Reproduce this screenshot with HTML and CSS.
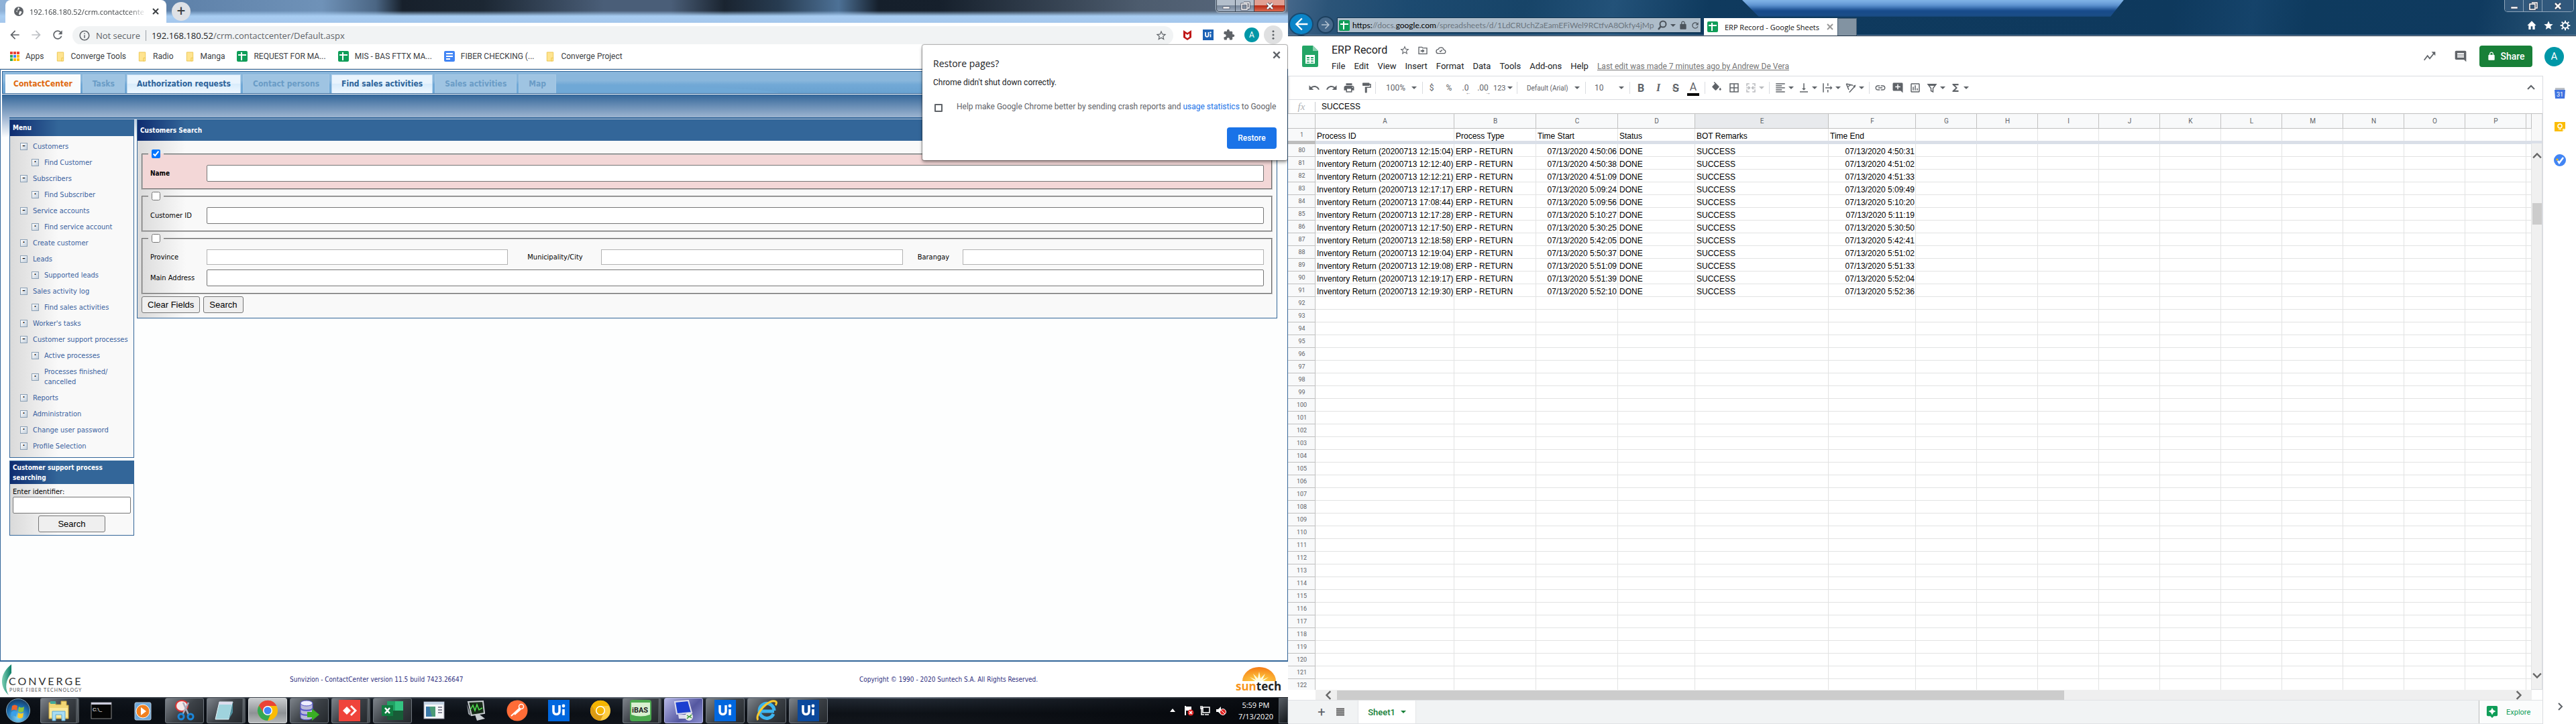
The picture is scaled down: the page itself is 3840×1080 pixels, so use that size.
FILE: index.html
```html
<!DOCTYPE html>
<html lang="en">
<head>
<meta charset="utf-8">
<title>ContactCenter and ERP Record</title>
<link rel="stylesheet" href="styles.css">
</head>
<body>
<svg class="defs" aria-hidden="true">
  <symbol id="back" viewBox="0 0 24 24"><path d="M20 11H7.830l5.590-5.590L12 4l-8 8 8 8 1.410-1.410L7.830 13H20v-2z"/></symbol>
  <symbol id="reload" viewBox="0 0 24 24"><path d="M17.650 6.350C16.200 4.900 14.210 4 12 4c-4.420 0-7.990 3.580-7.990 8s3.570 8 7.990 8c3.730 0 6.840-2.550 7.730-6h-2.080c-.82 2.330-3.040 4-5.650 4-3.310 0-6-2.690-6-6s2.690-6 6-6c1.660 0 3.140.69 4.220 1.780L13 11h7V4l-2.350 2.350z"/></symbol>
  <symbol id="info" viewBox="0 0 24 24"><path d="M11 7h2v2h-2zm0 4h2v6h-2zm1-9C6.480 2 2 6.480 2 12s4.480 10 10 10 10-4.480 10-10S17.520 2 12 2zm0 18c-4.410 0-8-3.590-8-8s3.590-8 8-8 8 3.590 8 8-3.590 8-8 8z"/></symbol>
  <symbol id="star" viewBox="0 0 24 24"><path d="M22 9.240l-7.190-.62L12 2 9.190 8.630 2 9.240l5.460 4.730L5.820 21 12 17.270 18.180 21l-1.630-7.030L22 9.240zM12 15.400l-3.760 2.270 1-4.280-3.320-2.880 4.380-.38L12 6.100l1.710 4.040 4.380.38-3.320 2.880 1 4.280L12 15.400z"/></symbol>
  <symbol id="starfull" viewBox="0 0 24 24"><path d="M12 17.270 18.180 21l-1.640-7.030L22 9.240l-7.190-.61L12 2 9.190 8.630 2 9.240l5.460 4.730L5.820 21z"/></symbol>
  <symbol id="puzzle" viewBox="0 0 24 24"><path d="M20.500 11H19V7c0-1.100-.9-2-2-2h-4V3.500C13 2.120 11.880 1 10.500 1S8 2.120 8 3.500V5H4c-1.100 0-1.990.9-1.990 2v3.800H3.500c1.490 0 2.700 1.210 2.700 2.700s-1.210 2.700-2.700 2.700H2V20c0 1.100.9 2 2 2h3.800v-1.500c0-1.490 1.210-2.700 2.700-2.700 1.490 0 2.700 1.210 2.700 2.700V22H17c1.100 0 2-.9 2-2v-4h1.500c1.380 0 2.500-1.120 2.500-2.500S21.880 11 20.500 11z"/></symbol>
  <symbol id="dots" viewBox="0 0 24 24"><circle cx="12" cy="5" r="2"/><circle cx="12" cy="12" r="2"/><circle cx="12" cy="19" r="2"/></symbol>
  <symbol id="globe" viewBox="0 0 16 16"><circle cx="8" cy="8" r="7"/><path d="M7 2c2 1 3 2 1 3s-1 2-3 2 1 2 0 4M9 8c3-1 4 1 3 2s-1 3-3 3 0-3 0-5z" fill="#fff"/></symbol>
  <symbol id="folder" viewBox="0 0 12 16"><path d="M1 1h10v9l-2 5H1z" fill="#ffe490" stroke="#ecc54e"/><path d="M8 15v-5h3v5z" fill="#ffe490" stroke="#ecc54e"/></symbol>
  <symbol id="sheetico" viewBox="0 0 16 16"><rect width="16" height="16" rx="2" fill="#0f9d58"/><path d="M2 6h12M7 2v12" stroke="#fff" stroke-width="2"/></symbol>
  <symbol id="docico" viewBox="0 0 16 16"><rect width="16" height="16" rx="2" fill="#4285f4"/><path d="M3 4h10M3 8h10M3 12h6" stroke="#fff" stroke-width="2"/></symbol>
  <symbol id="cross" viewBox="0 0 12 12"><path d="M2 2l8 8M10 2l-8 8" stroke="currentColor" stroke-width="2" fill="none"/></symbol>
  <symbol id="winmin" viewBox="0 0 16 16"><rect x="3" y="9" width="10" height="3" fill="#fff" stroke="#445" stroke-width=".6"/></symbol>
  <symbol id="winrest" viewBox="0 0 16 16"><path d="M6 3h8v8h-2M3 5h8v8H3z" fill="none" stroke="#445" stroke-width="3"/><path d="M6 3h8v8h-2M3 5h8v8H3z" fill="none" stroke="#fff" stroke-width="1.500"/></symbol>
  <symbol id="winx" viewBox="0 0 16 16"><path d="M4 4l8 8M12 4l-8 8" stroke="#334" stroke-width="4"/><path d="M4 4l8 8M12 4l-8 8" stroke="#fff" stroke-width="2.500"/></symbol>
  <symbol id="caret" viewBox="0 0 8 8"><path d="M0 2h8L4 6z"/></symbol>
  <symbol id="undo" viewBox="0 0 24 24"><path d="M12.500 8c-2.650 0-5.050.99-6.900 2.600L2 7v9h9l-3.620-3.620c1.390-1.160 3.160-1.880 5.120-1.880 3.540 0 6.550 2.310 7.600 5.500l2.370-.78C21.080 11.030 17.150 8 12.500 8z"/></symbol>
  <symbol id="redo" viewBox="0 0 24 24"><path d="M18.400 10.600C16.550 8.990 14.150 8 11.500 8c-4.650 0-8.580 3.030-9.960 7.220L3.900 16c1.050-3.190 4.050-5.500 7.600-5.500 1.950 0 3.730.72 5.120 1.880L13 16h9V7l-3.600 3.600z"/></symbol>
  <symbol id="print" viewBox="0 0 24 24"><path d="M19 8H5c-1.660 0-3 1.340-3 3v6h4v4h12v-4h4v-6c0-1.660-1.340-3-3-3zm-3 11H8v-5h8v5zm3-7c-.55 0-1-.45-1-1s.45-1 1-1 1 .45 1 1-.45 1-1 1zm-1-9H6v4h12V3z"/></symbol>
  <symbol id="paint" viewBox="0 0 24 24"><path d="M18 4V3c0-.55-.45-1-1-1H5c-.55 0-1 .45-1 1v4c0 .55.45 1 1 1h12c.55 0 1-.45 1-1V6h1v4H9v11c0 .55.45 1 1 1h2c.55 0 1-.45 1-1v-9h8V4h-3z"/></symbol>
  <symbol id="fill" viewBox="0 0 24 24"><path d="M16.560 8.940L7.620 0 6.210 1.410l2.380 2.380-5.150 5.150c-.59.59-.59 1.540 0 2.120l5.500 5.500c.29.29.68.44 1.060.44s.77-.15 1.060-.44l5.500-5.500c.59-.58.59-1.530 0-2.120zM19 11.500s-2 2.170-2 3.500c0 1.100.9 2 2 2s2-.9 2-2c0-1.330-2-3.500-2-3.500z"/></symbol>
  <symbol id="borders" viewBox="0 0 24 24"><path d="M3 3v18h18V3H3zm8 16H5v-6h6v6zm0-8H5V5h6v6zm8 8h-6v-6h6v6zm0-8h-6V5h6v6z"/></symbol>
  <symbol id="merge" viewBox="0 0 24 24"><path d="M9 4H4v5M15 4h5v5M9 20H4v-5M15 20h5v-5M3 12h6M21 12h-6M7 9l3 3-3 3M17 9l-3 3 3 3" fill="none" stroke="currentColor" stroke-width="2"/></symbol>
  <symbol id="align" viewBox="0 0 24 24"><path d="M15 15H3v2h12v-2zm0-8H3v2h12V7zM3 13h18v-2H3v2zm0 8h18v-2H3v2zM3 3v2h18V3H3z"/></symbol>
  <symbol id="valign" viewBox="0 0 24 24"><path d="M16 13h-3V3h-2v10H8l4 4 4-4zM4 19v2h16v-2H4z"/></symbol>
  <symbol id="wrap" viewBox="0 0 24 24"><path d="M4 3v18M13 3v5M13 16v5M8 12h11" fill="none" stroke="currentColor" stroke-width="2"/><path d="M18 8l4 4-4 4z"/></symbol>
  <symbol id="rotate" viewBox="0 0 24 24"><path d="M3 4l13 3M3 4l5 12M6 10l6-4M9 21L20 9" fill="none" stroke="currentColor" stroke-width="2"/><path d="M16 8l6-2-2 6z"/></symbol>
  <symbol id="link" viewBox="0 0 24 24"><path d="M3.900 12c0-1.710 1.390-3.100 3.100-3.100h4V7H7c-2.760 0-5 2.240-5 5s2.240 5 5 5h4v-1.900H7c-1.710 0-3.100-1.390-3.100-3.100zM8 13h8v-2H8v2zm9-6h-4v1.900h4c1.710 0 3.100 1.390 3.100 3.100s-1.390 3.100-3.100 3.100h-4V17h4c2.760 0 5-2.240 5-5s-2.240-5-5-5z"/></symbol>
  <symbol id="addnote" viewBox="0 0 24 24"><path fill-rule="evenodd" d="M22 4c0-1.100-.9-2-2-2H4c-1.100 0-2 .9-2 2v12c0 1.100.9 2 2 2h14l4 4V4zM17 11h-4v4h-2v-4H7V9h4V5h2v4h4v2z"/></symbol>
  <symbol id="note" viewBox="0 0 24 24"><path fill-rule="evenodd" d="M22 4c0-1.100-.9-2-2-2H4c-1.100 0-2 .9-2 2v12c0 1.100.9 2 2 2h14l4 4V4zM18 14H6v-2h12v2zm0-3H6V9h12v2zm0-3H6V6h12v2z"/></symbol>
  <symbol id="chart" viewBox="0 0 24 24"><path d="M19 3H5c-1.100 0-2 .9-2 2v14c0 1.100.9 2 2 2h14c1.100 0 2-.9 2-2V5c0-1.100-.9-2-2-2zm0 16H5V5h14v14zM7 10h2v7H7zm4-3h2v10h-2zm4 6h2v4h-2z"/></symbol>
  <symbol id="filter" viewBox="0 0 24 24"><path d="M4 5h16l-6 8v7l-4-2v-5z" fill="none" stroke="currentColor" stroke-width="2"/><path d="M4 4h16l-2 4H6z"/></symbol>
  <symbol id="sigma" viewBox="0 0 24 24"><path d="M18 4H6v2l6.500 6L6 18v2h12v-3h-7l5-5-5-5h7z"/></symbol>
  <symbol id="trend" viewBox="0 0 24 24"><path d="M2 19l6-8 4 5 8-10" fill="none" stroke="currentColor" stroke-width="2"/><path d="M15 4h7v7z"/></symbol>
  <symbol id="lock" viewBox="0 0 24 24"><path fill-rule="evenodd" d="M18 8h-1V6c0-2.760-2.240-5-5-5S7 3.240 7 6v2H6c-1.100 0-2 .9-2 2v10c0 1.100.9 2 2 2h12c1.100 0 2-.9 2-2V10c0-1.100-.9-2-2-2zM9 8V6c0-1.660 1.340-3 3-3s3 1.340 3 3v2z"/></symbol>
  <symbol id="move" viewBox="0 0 24 24"><path d="M3 5h7l2 2h9v13H3z" fill="none" stroke="currentColor" stroke-width="2"/><path d="M11 9l5 4.500-5 4V15H7v-3h4z"/></symbol>
  <symbol id="cloud" viewBox="0 0 24 24"><path d="M6 19a4.500 4.500 0 0 1 0-9 6.500 6.500 0 0 1 12.500 1A4 4 0 0 1 18 19zM9 13l2 2 4-4" fill="none" stroke="currentColor" stroke-width="2"/></symbol>
  <symbol id="home" viewBox="0 0 24 24"><path d="M10 21v-7h4v7h5v-9h3L12 2 2 12h3v9z"/></symbol>
  <symbol id="gear" viewBox="0 0 24 24"><circle cx="12" cy="12" r="6" fill="none" stroke="currentColor" stroke-width="3"/><path d="M12 1v4M12 19v4M1 12h4M19 12h4M4 4l3 3M17 17l3 3M4 20l3-3M17 7l3-3" stroke="currentColor" stroke-width="3"/></symbol>
  <symbol id="search" viewBox="0 0 16 16"><circle cx="9" cy="6" r="4.500" fill="none" stroke="currentColor" stroke-width="2"/><path d="M6 9l-4 5" stroke="currentColor" stroke-width="2.500"/></symbol>
  <symbol id="chev" viewBox="0 0 12 12"><path d="M4 1l5 5-5 5" fill="none" stroke="currentColor" stroke-width="2"/></symbol>
  <symbol id="ui" viewBox="0 0 32 32"><rect width="32" height="32" fill="currentColor"/><path d="M8 8v9c0 6 9 6 9 0V8M23 14v9" fill="none" stroke="#fff" stroke-width="3.500"/><circle cx="23" cy="9" r="2.400" fill="#fff"/></symbol>
</svg>

<div class="desktop">
  <section class="screen chrome">
    <header class="titlebar">
      <div class="tab"><svg class="i16 grey"><use href="#globe"/></svg><span class="tabname">192.168.180.52/crm.contactcente</span><button class="bare" aria-label="Close tab"><svg class="i12"><use href="#cross"/></svg></button></div>
      <button class="newtab" aria-label="New tab">+</button>
      <div class="winbtns"><button aria-label="Minimise"><svg class="i16"><use href="#winmin"/></svg></button><button aria-label="Restore down"><svg class="i16"><use href="#winrest"/></svg></button><button class="red" aria-label="Close"><svg class="i16"><use href="#winx"/></svg></button></div>
    </header>
    <div class="navbar">
      <button class="bare" aria-label="Back"><svg class="i20 grey"><use href="#back"/></svg></button>
      <button class="bare fwd" aria-label="Forward"><svg class="i20"><use href="#back"/></svg></button>
      <button class="bare" aria-label="Reload"><svg class="i20 grey"><use href="#reload"/></svg></button>
      <div class="omnibox"><svg class="i18 grey"><use href="#info"/></svg><span class="insecure">Not secure</span><span class="url"><b>192.168.180.52</b>/crm.contactcenter/Default.aspx</span><svg class="i18 grey end"><use href="#star"/></svg></div>
      <div class="exts">
        <svg class="i18" viewBox="0 0 18 18"><path d="M3 2l6 4 6-4v11l-6 4-6-4zM6 7v5l3 2 3-2V7L9 9z" fill="#c01818" fill-rule="evenodd"/></svg>
        <svg class="i16 uiblue"><use href="#ui"/></svg>
        <svg class="i18 grey"><use href="#puzzle"/></svg>
        <span class="avatar small">A</span>
        <button class="more" aria-label="Menu"><svg class="i18 grey"><use href="#dots"/></svg></button>
      </div>
    </div>
    <nav class="bookmarks">
      <a href="#"><svg class="i14" viewBox="0 0 14 14"><path d="M0 0h4v4H0zM5 0h4v4H5zM10 0h4v4h-4z" fill="#ea4335"/><path d="M0 5h4v4H0z" fill="#34a853"/><path d="M5 5h4v4H5z" fill="#4285f4"/><path d="M10 5h4v4h-4zM5 10h4v4H5zM10 10h4v4h-4z" fill="#fbbc05"/><path d="M0 10h4v4H0z" fill="#34a853"/></svg>Apps</a>
      <a href="#"><svg class="fold"><use href="#folder"/></svg>Converge Tools</a>
      <a href="#"><svg class="fold"><use href="#folder"/></svg>Radio</a>
      <a href="#"><svg class="fold"><use href="#folder"/></svg>Manga</a>
      <a href="#"><svg class="i16"><use href="#sheetico"/></svg>REQUEST FOR MA...</a>
      <a href="#"><svg class="i16"><use href="#sheetico"/></svg>MIS - BAS FTTX MA...</a>
      <a href="#"><svg class="i16"><use href="#docico"/></svg>FIBER CHECKING (...</a>
      <a href="#"><svg class="fold"><use href="#folder"/></svg>Converge Project</a>
    </nav>

    <main class="crm">
      <nav class="crmtabs">
        <a href="#" class="current">ContactCenter</a><a href="#" class="off">Tasks</a><a href="#">Authorization requests</a><a href="#" class="off">Contact persons</a><a href="#">Find sales activities</a><a href="#" class="off">Sales activities</a><a href="#" class="off">Map</a>
      </nav>
      <div class="crmbody">
        <div class="columns">
          <aside class="side">
            <section class="panel">
              <h2>Menu</h2>
              <ul class="tree">
                <li class="open"><a href="#">Customers</a></li>
                <li class="sub"><a href="#">Find Customer</a></li>
                <li class="open"><a href="#">Subscribers</a></li>
                <li class="sub"><a href="#">Find Subscriber</a></li>
                <li class="open"><a href="#">Service accounts</a></li>
                <li class="sub"><a href="#">Find service account</a></li>
                <li><a href="#">Create customer</a></li>
                <li class="open"><a href="#">Leads</a></li>
                <li class="sub"><a href="#">Supported leads</a></li>
                <li class="open"><a href="#">Sales activity log</a></li>
                <li class="sub"><a href="#">Find sales activities</a></li>
                <li><a href="#">Worker's tasks</a></li>
                <li class="open"><a href="#">Customer support processes</a></li>
                <li class="sub"><a href="#">Active processes</a></li>
                <li class="sub"><a href="#">Processes finished/<br>cancelled</a></li>
                <li><a href="#">Reports</a></li>
                <li><a href="#">Administration</a></li>
                <li><a href="#">Change user password</a></li>
                <li><a href="#">Profile Selection</a></li>
              </ul>
            </section>
            <section class="panel">
              <h2>Customer support process searching</h2>
              <form class="lookup">
                <label for="ident">Enter identifier:</label>
                <input id="ident" type="text">
                <button type="button">Search</button>
              </form>
            </section>
          </aside>
          <section class="panel results">
            <h2>Customers Search</h2>
            <form class="criteria">
              <fieldset class="active"><legend><input type="checkbox" checked aria-label="Search by name"></legend>
                <div class="row"><label for="name">Name</label><input id="name" type="text"></div></fieldset>
              <fieldset><legend><input type="checkbox" aria-label="Search by customer ID"></legend>
                <div class="row"><label for="cid">Customer ID</label><input id="cid" type="text"></div></fieldset>
              <fieldset><legend><input type="checkbox" aria-label="Search by address"></legend>
                <div class="row three"><label for="prov">Province</label><input id="prov" type="text"><label for="city" class="city">Municipality/City</label><input id="city" type="text"><label for="brgy" class="brgy">Barangay</label><input id="brgy" type="text"></div>
                <div class="row"><label for="addr">Main Address</label><input id="addr" type="text"></div></fieldset>
              <div class="actions"><button type="button">Clear Fields</button><button type="button">Search</button></div>
            </form>
          </section>
        </div>
      </div>
    </main>
    <footer class="credits">
      <svg class="converge" viewBox="0 0 130 46"><defs><linearGradient id="leaf" x1="0" x2="1"><stop offset="0" stop-color="#7fd0b4"/><stop offset="1" stop-color="#0a7d66"/></linearGradient></defs><path d="M14 0C-4 14-4 34 10 46 4 36 5 24 14 13z" fill="url(#leaf)"/><text x="10" y="31" font-size="16" letter-spacing="3" fill="#333">CONVERGE</text><text x="11" y="41" font-size="7" letter-spacing="1" fill="#555">PURE FIBER TECHNOLOGY</text></svg>
      <span>Sunvizion - ContactCenter version 11.5 build 7423.26647</span>
      <span>Copyright © 1990 - 2020 Suntech S.A. All Rights Reserved.</span>
      <svg class="suntech" viewBox="0 0 74 40"><defs><radialGradient id="sun" cx=".5" cy="1" r="1"><stop offset="0" stop-color="#ffd84a"/><stop offset="1" stop-color="#f57a14"/></radialGradient></defs><path d="M10 22a25 21 0 0 1 50 0z" fill="url(#sun)"/><path d="M35 8l2 10 7-7-4 9 9-4-8 6H29l-8-6 9 4-4-9 7 7z" fill="#fffbe0"/><text x="0" y="36" font-size="17" font-weight="bold" fill="#f7941d">sun<tspan fill="#222">tech</tspan></text></svg>
    </footer>

    <nav class="taskbar">
      <button class="orb" aria-label="Start"><svg viewBox="0 0 38 38"><defs><radialGradient id="orb" cx=".5" cy=".8" r=".8"><stop offset="0" stop-color="#7fd4f5"/><stop offset=".6" stop-color="#1b6eb0"/><stop offset="1" stop-color="#18375e"/></radialGradient></defs><circle cx="19" cy="19" r="17.500" fill="url(#orb)" stroke="#8ab" /><path d="M10 12q4-3 8 0l-1 7q-4-3-8 0z" fill="#f0642c"/><path d="M20 13q4 3 8 0l-1 7q-4 3-8 0z" fill="#8cc63f"/><path d="M9 21q4-3 8 0l-1 7q-4-3-8 0z" fill="#3aa0e8"/><path d="M19 22q4 3 8 0l-1 7q-4 3-8 0z" fill="#fcc92a"/></svg></button>
      <div class="apps">
        <button class="run stack" aria-label="Explorer"><svg viewBox="0 0 32 32"><path d="M2 4h10v3h8V2h8v6h3v20H2z" fill="#f2d675" stroke="#c9a540"/><path d="M4 2h8v4H4z" fill="#4a9"/><path d="M3 12h27v14H3z" fill="#fbe99b"/><path d="M7 31V17h19v14h-5v-9h-9v9z" fill="#a8dcf4" stroke="#5aa7d4"/></svg></button>
        <button aria-label="Command prompt"><svg viewBox="0 0 32 32"><rect x="1" y="4" width="30" height="24" fill="#050505" stroke="#888"/><path d="M1 4h30v3H1z" fill="#ccd"/><text x="3" y="17" font-size="8" fill="#fff">C:\_</text></svg></button>
        <button aria-label="Media player"><svg viewBox="0 0 32 32"><rect x="4" y="4" width="24" height="26" rx="2" fill="#6fa8d8" stroke="#bcd"/><circle cx="16" cy="17" r="10" fill="#f08020" stroke="#fff"/><path d="M13 11l8 6-8 6z" fill="#fff"/></svg></button>
        <button class="run" aria-label="Snipping tool"><svg viewBox="0 0 32 32"><ellipse cx="12" cy="9" rx="9" ry="8" fill="#f4e9e9" stroke="#d33" stroke-width="2"/><path d="M14 4l8 18M22 4l-9 18" stroke="#aab" stroke-width="2.500"/><circle cx="11" cy="25" r="4" fill="none" stroke="#1c86d8" stroke-width="3"/><circle cx="25" cy="25" r="4" fill="none" stroke="#1c86d8" stroke-width="3"/></svg></button>
        <button class="run stack" aria-label="Notepad"><svg viewBox="0 0 32 32"><path d="M8 3h20l-6 26H2z" fill="#9fd3dd" stroke="#e8f4f8"/><path d="M8 3h20l-1 4H7z" fill="#dde"/><path d="M28 3v16l-6 10z" fill="#4d8d9b"/></svg></button>
        <button class="run lit" aria-label="Chrome"><svg viewBox="0 0 32 32"><circle cx="16" cy="16" r="15" fill="#fbbc05"/><path d="M3 8.500A15 15 0 0 1 29.500 9H16l-6 11z" fill="#ea4335"/><path d="M3 8.500l7.500 12L20 22l-4 9A15 15 0 0 1 3 8.500z" fill="#34a853"/><circle cx="16" cy="16" r="7" fill="#fff"/><circle cx="16" cy="16" r="5.500" fill="#4285f4"/></svg></button>
        <button class="run" aria-label="Database"><svg viewBox="0 0 32 32"><path d="M3 5v21c0 5 18 5 18 0V5z" fill="#b9b9d8" stroke="#55c"/><ellipse cx="12" cy="5" rx="9" ry="4" fill="#eef" stroke="#55c"/><path d="M3 12c0 5 18 5 18 0M3 19c0 5 18 5 18 0" fill="none" stroke="#55c" stroke-width="2"/><path d="M13 18h7v-5l11 9-11 9v-5h-7z" fill="#3aae24"/></svg></button>
        <button class="run stack" aria-label="AnyDesk"><svg viewBox="0 0 32 32"><rect width="32" height="32" fill="#ef443b"/><path d="M6 16l6-6 6 6-6 6zM17 10l2-2 8 8-8 8-2-2 6-6z" fill="#fff"/></svg></button>
        <button class="run" aria-label="Excel"><svg viewBox="0 0 32 32"><rect x="8" y="2" width="24" height="28" fill="#21a366"/><path d="M20 2h12v14H20z" fill="#33c481"/><path d="M8 16h24v14H8z" fill="#185c37"/><rect y="8" width="17" height="16" fill="#107c41"/><path d="M5 12l7 8M12 12l-7 8" stroke="#fff" stroke-width="2.500"/></svg></button>
        <button aria-label="Program"><svg viewBox="0 0 32 32"><rect x="1" y="3" width="30" height="25" fill="#f4f6f8" stroke="#99a"/><path d="M1 3h30v4H1z" fill="#c4d4e4"/><path d="M4 10h14v15H4z" fill="#3a78a8"/><path d="M9 10h9v15h-5z" fill="#4b9a76"/><path d="M22 11h6M22 15h6M22 19h6" stroke="#889" stroke-width="2"/></svg></button>
        <button aria-label="Monitor"><svg viewBox="0 0 32 32"><path d="M5 3l22-1 2 18-19 3z" fill="#182a18" stroke="#c8ccd0" stroke-width="2"/><path d="M8 15l4-7 3 8 3-9 3 8 5-3" stroke="#4fe04f" fill="none" stroke-width="1.500"/><path d="M3 6l6 18-4-3z" fill="#9aa0a6"/><path d="M15 22h7l8 6-12 3z" fill="#c8ccd0"/></svg></button>
        <button aria-label="Postman"><svg viewBox="0 0 32 32"><circle cx="16" cy="16" r="15.500" fill="#ff6c37"/><path d="M7 24l13-12M12 22l9-8" stroke="#fff" stroke-width="2"/><circle cx="22" cy="10" r="3.500" fill="none" stroke="#fff" stroke-width="1.500"/></svg></button>
        <button class="c1" aria-label="UiPath"><svg><use href="#ui"/></svg></button>
        <button aria-label="Chrome Canary"><svg viewBox="0 0 32 32"><circle cx="16" cy="16" r="15" fill="#ffcd40"/><path d="M3 8.500A15 15 0 0 1 29.500 9H16l-6 11z" fill="#f4b400"/><path d="M3 8.500l7.500 12L20 22l-4 9A15 15 0 0 1 3 8.500z" fill="#db9b13"/><circle cx="16" cy="16" r="7" fill="#fff"/><circle cx="16" cy="16" r="5.500" fill="#f4b400"/></svg></button>
        <button class="run stack" aria-label="iBAS"><svg viewBox="0 0 32 32"><rect width="32" height="32" rx="4" fill="#4aa84e"/><path d="M2 4h28v18q-14 5-28 0z" fill="#d8f0d0"/><text x="3" y="19" font-size="11" font-weight="bold" fill="#222">iBAS</text></svg></button>
        <button class="run violet" aria-label="Remote desktop"><svg viewBox="0 0 32 32"><path d="M3 3l20-2 5 18-22 2z" fill="#1c3fd0" stroke="#dde" stroke-width="2"/><path d="M8 22h12l3 6H9z" fill="#dde"/><circle cx="24" cy="25" r="6" fill="#e8ece8"/><path d="M21 23l3 2-3 3M28 22l-3 3 3 2" stroke="#3a9a3a" stroke-width="1.500" fill="none"/></svg></button>
        <button class="run c1" aria-label="UiPath Studio"><svg><use href="#ui"/></svg></button>
        <button class="run" aria-label="Internet Explorer"><svg viewBox="0 0 32 32"><path d="M7 17h20M26 21a11 11 0 1 1 1-5" fill="none" stroke="#3cb4ee" stroke-width="5"/><path d="M3 30C-3 22 20-4 30 3c1 1 0 4-1 5" fill="none" stroke="#fbc92c" stroke-width="3"/></svg></button>
        <button class="run c2" aria-label="UiPath Robot"><svg><use href="#ui"/></svg></button>
      </div>
      <div class="tray">
        <svg class="i8" viewBox="0 0 8 8"><path d="M0 6l4-5 4 5z" fill="#fff"/></svg>
        <svg class="i16" viewBox="0 0 16 16"><path d="M3 1v14" stroke="#fff" stroke-width="2"/><path d="M4 2h8v6H4z" fill="#fff"/><circle cx="11" cy="11" r="4.500" fill="#d22"/><path d="M9 9l4 4M13 9l-4 4" stroke="#fff" stroke-width="1.500"/></svg>
        <svg class="i16" viewBox="0 0 16 16"><path d="M5 3h10v8H5zM8 14h6M2 1v4h2V1M3 5v9h4" fill="none" stroke="#fff" stroke-width="1.500"/></svg>
        <svg class="i16" viewBox="0 0 16 16"><path d="M1 6h3l4-4v12l-4-4H1z" fill="#fff"/><circle cx="11" cy="10" r="4.500" fill="#d22" stroke="#fff"/><path d="M8 7l6 6" stroke="#fff"/></svg>
        <time>5:59 PM<br>7/13/2020</time>
        <button class="peek" aria-label="Show desktop"></button>
      </div>
    </nav>

    <div class="bubble" role="dialog" aria-label="Restore pages?">
      <button class="bare shut" aria-label="Close"><svg class="i14"><use href="#cross"/></svg></button>
      <h3>Restore pages?</h3>
      <p>Chrome didn't shut down correctly.</p>
      <div class="consent"><input id="crash" type="checkbox"><label for="crash">Help make Google Chrome better by sending crash reports and <a href="#">usage statistics</a> to Google</label></div>
      <button class="restore">Restore</button>
    </div>
  </section>

  <section class="screen ie">
    <header class="iebar">
      <div class="glow"></div>
      <button class="ieback" aria-label="Back"><svg class="i28"><use href="#back"/></svg></button>
      <button class="iefwd" aria-label="Forward"><svg class="i18"><use href="#back"/></svg></button>
      <div class="address"><svg class="i16"><use href="#sheetico"/></svg><span class="ieurl"><b>https:</b>//docs.<b>google.com</b>/spreadsheets/d/1LdCRUchZaEamEFiWel9RCtfvA8Okfy4jMp</span><svg class="i16"><use href="#search"/></svg><svg class="i8"><use href="#caret"/></svg><svg class="i14"><use href="#lock"/></svg><svg class="i14"><use href="#reload"/></svg></div>
      <div class="ietab"><svg class="i16"><use href="#sheetico"/></svg><span>ERP Record - Google Sheets</span><button class="bare" aria-label="Close tab"><svg class="i12"><use href="#cross"/></svg></button></div>
      <button class="ienew" aria-label="New tab"></button>
      <div class="ieright">
        <div class="winbtns dark"><button aria-label="Minimise"><svg class="i16"><use href="#winmin"/></svg></button><button aria-label="Restore down"><svg class="i16"><use href="#winrest"/></svg></button><button class="last" aria-label="Close"><svg class="i16"><use href="#winx"/></svg></button></div>
        <div class="iecmds"><svg class="i16"><use href="#home"/></svg><svg class="i16"><use href="#starfull"/></svg><svg class="i16"><use href="#gear"/></svg></div>
      </div>
    </header>
    <header class="dochead">
      <svg class="logo" viewBox="0 0 24 32"><path d="M2 0h14l8 8v22a2 2 0 0 1-2 2H2a2 2 0 0 1-2-2V2a2 2 0 0 1 2-2z" fill="#23a566"/><path d="M16 0l8 8h-8z" fill="#8ed1b1"/><path d="M5 14h14v13H5zM7 17h4v2H7zm6 0h4v2h-4zm-6 3.500h4v1.500H7zm6 0h4v1.500h-4zM7 24h4v1.500H7zm6 0h4v1.500h-4z" fill="#fff" fill-rule="evenodd"/></svg>
      <div class="docinfo">
        <div class="doctitle"><h1>ERP Record</h1><svg class="i16"><use href="#star"/></svg><svg class="i16"><use href="#move"/></svg><svg class="i16"><use href="#cloud"/></svg></div>
        <nav class="menus"><a href="#">File</a><a href="#">Edit</a><a href="#">View</a><a href="#">Insert</a><a href="#">Format</a><a href="#">Data</a><a href="#">Tools</a><a href="#">Add-ons</a><a href="#">Help</a><a href="#" class="lastedit">Last edit was made 7 minutes ago by Andrew De Vera</a></nav>
      </div>
      <div class="docactions"><svg class="i20"><use href="#trend"/></svg><svg class="i20"><use href="#note"/></svg><button class="share"><svg class="i14"><use href="#lock"/></svg>Share</button><span class="avatar">A</span></div>
    </header>
    <div class="lower">
      <div class="editor">
        <div class="tools">
          <div class="grp lead"><button aria-label="Undo"><svg><use href="#undo"/></svg></button><button aria-label="Redo"><svg><use href="#redo"/></svg></button><button aria-label="Print"><svg><use href="#print"/></svg></button><button aria-label="Paint format"><svg><use href="#paint"/></svg></button></div>
          <div class="pick zoom"><select aria-label="Zoom"><option>100%</option></select><svg class="i8"><use href="#caret"/></svg></div>
          <div class="grp"><button>$</button><button>%</button><button>.0<sub>←</sub></button><button>.00<sub>→</sub></button><button class="num">123<svg class="i8"><use href="#caret"/></svg></button></div>
          <div class="pick font"><select aria-label="Font"><option>Default (Arial)</option></select><svg class="i8"><use href="#caret"/></svg></div>
          <div class="pick size"><select aria-label="Font size"><option>10</option></select><svg class="i8"><use href="#caret"/></svg></div>
          <div class="grp text"><button><b>B</b></button><button><i>I</i></button><button><s>S</s></button><button><span class="inked">A</span></button></div>
          <div class="grp cells"><button aria-label="Fill"><svg><use href="#fill"/></svg></button><button aria-label="Borders"><svg><use href="#borders"/></svg></button><button class="drop faint" aria-label="Merge"><svg><use href="#merge"/></svg><svg class="i8"><use href="#caret"/></svg></button></div>
          <div class="grp cells"><button class="drop" aria-label="Align"><svg><use href="#align"/></svg><svg class="i8"><use href="#caret"/></svg></button><button class="drop" aria-label="Vertical align"><svg><use href="#valign"/></svg><svg class="i8"><use href="#caret"/></svg></button><button class="drop" aria-label="Wrapping"><svg><use href="#wrap"/></svg><svg class="i8"><use href="#caret"/></svg></button><button class="drop" aria-label="Rotation"><svg><use href="#rotate"/></svg><svg class="i8"><use href="#caret"/></svg></button></div>
          <div class="grp text"><button aria-label="Link"><svg><use href="#link"/></svg></button><button aria-label="Comment"><svg><use href="#addnote"/></svg></button><button aria-label="Chart"><svg><use href="#chart"/></svg></button><button class="drop" aria-label="Filter"><svg><use href="#filter"/></svg><svg class="i8"><use href="#caret"/></svg></button><button class="drop" aria-label="Functions"><svg><use href="#sigma"/></svg><svg class="i8"><use href="#caret"/></svg></button></div>
          <button class="bare collapse" aria-label="Hide menus"><svg class="i12 up"><use href="#chev"/></svg></button>
        </div>
        <div class="formula"><label for="fx">fx</label><input id="fx" type="text" value="SUCCESS"></div>
        <div class="gridwrap">
          <div class="sheet">
            <table>
              <colgroup><col class="rh"><col class="ca"><col class="cb"><col class="cb"><col class="cd"><col class="ce"><col class="cf"><col class="cg"><col class="cg"><col class="cg"><col class="cg"><col class="cg"><col class="cg"><col class="cg"><col class="cg"><col class="cg"><col class="cg"><col></colgroup>
              <thead><tr id="letters"></tr></thead>
              <tbody id="rows"></tbody>
            </table>
          </div>
          <div class="vscroll"><div class="cap"></div><svg class="i14 up"><use href="#chev"/></svg><div class="vthumb"></div><svg class="i14 down"><use href="#chev"/></svg></div>
        </div>
        <div class="hscroll"><svg class="i14 left"><use href="#chev"/></svg><div class="track"><div class="hthumb"></div></div><svg class="i14"><use href="#chev"/></svg></div>
        <div class="sheets"><button class="bare plus" aria-label="Add sheet">+</button><button class="bare" aria-label="All sheets"><svg class="i12" viewBox="0 0 12 12"><path d="M0 1.500h12M0 4.500h12M0 7.500h12M0 10.500h12" stroke="#555" stroke-width="2"/></svg></button><button class="sheettab">Sheet1<svg class="i8"><use href="#caret"/></svg></button><button class="explore"><svg class="i18" viewBox="0 0 18 20"><path d="M2 0h14a2 2 0 0 1 2 2v13a2 2 0 0 1-2 2h-4l-3 3-3-3H2a2 2 0 0 1-2-2V2a2 2 0 0 1 2-2z" fill="#0f9d58"/><path d="M9 3l2 4 4 2-4 2-2 4-2-4-4-2 4-2z" fill="#fff"/></svg>Explore</button></div>
      </div>
      <aside class="addons">
        <svg class="i18" viewBox="0 0 18 18"><path d="M2 1h14v5H2z" fill="#bdc1c6"/><path d="M1 4h16l-1 13H2z" fill="#3f72e0"/><text x="4" y="14" font-size="9" fill="#fff">31</text></svg>
        <svg class="i18" viewBox="0 0 18 18"><path d="M1 2h16v10l-4 4H1z" fill="#fbbc04"/><path d="M13 16v-4h4z" fill="#fff3c0"/><circle cx="9" cy="8" r="3" fill="none" stroke="#fff" stroke-width="1.500"/><path d="M7 13h4" stroke="#fff"/></svg>
        <svg class="i18" viewBox="0 0 18 18"><circle cx="9" cy="9" r="9" fill="#4285f4"/><path d="M6 10l2 3 6-8" stroke="#fff" stroke-width="2.500" fill="none"/><circle cx="5" cy="8" r="1.500" fill="#fbbc04"/></svg>
        <svg class="i12 bottom"><use href="#chev"/></svg>
      </aside>
    </div>
  </section>
</div>
<script src="sheet.js"></script>
</body>
</html>
```
FILE: styles.css
```css
* { box-sizing: border-box; }
body { margin: 0; background: #fff; font-family: Roboto, "Open Sans", sans-serif; font-size: 12px; }
a { color: inherit; text-decoration: none; }
button { font: inherit; color: inherit; cursor: pointer; }
svg { display: block; fill: currentColor; flex: none; }
h1, h2, h3, p, ul { margin: 0; padding: 0; font-weight: normal; }
.defs { position: absolute; width: 0; height: 0; }
.bare { border: 0; background: none; padding: 0; display: flex; align-items: center; justify-content: center; }
.i8 { width: 8px; height: 8px; }
.i12 { width: 12px; height: 12px; }
.i14 { width: 14px; height: 14px; }
.i16 { width: 16px; height: 16px; }
.i18 { width: 18px; height: 18px; }
.i20 { width: 20px; height: 20px; }
.i28 { width: 28px; height: 28px; }
.grey { color: #5f6368; }

.desktop { display: flex; height: 100vh; min-height: 860px; overflow: hidden; }
.screen { flex: 1 1 0; min-width: 0; display: flex; flex-direction: column; position: relative; }

/* Chrome window frame */
.titlebar { height: 34px; display: flex; align-items: flex-start; padding-left: 8px; background:
  linear-gradient(to bottom, transparent 16px, #a8cdf2 24px, #a4c6ec),
  linear-gradient(to right, #8fb2d8 0, #5d80a8 250px, #6f92b8 480px, #4b6684 560px, #17202b 600px, #1c2733 720px, #4a5e78 900px, #4a5e78 1000px, #1a2430 1080px, #273b50 1160px, #4d7196 1250px, #151f2b 1310px, #16202c 1400px, #4d5c6e 1700px, #5a6a80); }
.tab { width: 240px; height: 34px; background: #fff; border-radius: 8px 8px 0 0; display: flex; align-items: center; gap: 8px; padding: 0 10px 0 12px; color: #3c4043; }
.tabname { flex: 1; white-space: nowrap; font: 11px "Open Sans", sans-serif; -webkit-mask: linear-gradient(to right, #000 85%, transparent); mask: linear-gradient(to right, #000 85%, transparent); }
.newtab { width: 28px; height: 28px; margin: 3px 0 0 8px; border: 0; border-radius: 50%; background: #dee1e6; font-size: 22px; line-height: 26px; padding: 0; color: #3c4043; }
.winbtns { display: flex; margin: 0 4px 0 auto; border: 1px solid #3a4654; border-top: 0; border-radius: 0 0 5px 5px; overflow: hidden; box-shadow: 0 0 1px 1px #b9c6d4; }
.winbtns button { width: 28px; height: 17px; border: 0; border-right: 1px solid #3a4654; padding: 0; display: grid; place-items: center; background: linear-gradient(#b4bfcc 45%, #78879a 50%, #9dabbd); }
.winbtns .red { width: 45px; border: 0; background: linear-gradient(#e0a093 45%, #b92c17 50%, #d9694f); }
.navbar { height: 32px; background: #fff; display: flex; align-items: center; gap: 12px; padding: 4px 8px 0 12px; }
.navbar .fwd { color: #bcbfc3; transform: scaleX(-1); }
.omnibox { flex: 1; height: 28px; margin-top: 1px; border-radius: 14px; background: #f1f3f4; display: flex; align-items: center; gap: 8px; padding: 0 9px; font: 13px "Open Sans", sans-serif; color: #5f6368; }
.insecure { border-right: 1px solid #9aa0a6; padding-right: 8px; line-height: 16px; font-size: 13px; }
.url b { font-weight: normal; color: #202124; }
.end { margin-left: auto; }
.exts { display: flex; align-items: center; gap: 14px; }
.exts .more { width: 28px; height: 28px; margin-left: -7px; border: 0; border-radius: 50%; background: #dfe0e1; display: grid; place-items: center; padding: 0; }
.uiblue { color: #1b62b5; }
.avatar { width: 29px; height: 29px; border-radius: 50%; background: #0097a7; color: #fff; display: grid; place-items: center; font-size: 15px; }
.avatar.small { width: 22px; height: 22px; font-size: 12px; }
.bookmarks { height: 37px; padding: 0 15px; display: flex; align-items: center; gap: 18px; background: #fff; color: #3c4043; border-bottom: 1px solid #d5d8dc; }
.bookmarks a { display: flex; align-items: center; gap: 9px; }
.fold { width: 12px; height: 15px; margin-right: 1px; }

/* CRM page */
.crm { flex: 1; min-height: 0; display: flex; flex-direction: column; border: 1px solid #336699; border-bottom-width: 2px; padding: 2px 0 0 2px; font: 11px/15px "DejaVu Sans Condensed", "DejaVu Sans", sans-serif; }
.crmtabs { height: 34px; border: 1px solid #336699; border-right: 0; display: flex; align-items: flex-end; gap: 3px; padding-left: 4px; background:
  radial-gradient(ellipse 500px 14px at 660px 32px, #6fa8d6 98%, transparent),
  linear-gradient(#8ab7dc 40%, #72a9d6 60%, #69a2d1); }
.crmtabs a { height: 28px; line-height: 27px; padding: 0 13px; border: 1px solid #b7d5ee; border-bottom: 0; background: linear-gradient(#e9f4fd 45%, #d9ecfb 50%, #eef7ff); color: #2c639a; font-weight: bold; font-size: 12px; }
.crmtabs a + a { padding: 0 14px; }
.crmtabs .off { background: #9fc4e2; border-color: #a6c9e5; color: #6a9cc6; }
.crmtabs .current { background: #f9fcfd; border-color: #fff; color: #e06a10; padding: 0 11px; }
.crmbody { flex: 1; margin-top: 1px; padding: 34px 15px 0 11px; background: linear-gradient(#336699, #a3b9d4 36px, #fdfefe 64px); }
.columns { display: flex; align-items: flex-start; gap: 4px; border-top: 2px solid #336699; padding-top: 1px; background: linear-gradient(#b8cadf, #fdfefe 30px); }
.side { flex: 0 0 186px; display: grid; gap: 4px; }
.panel { border: 1px solid #336699; background: linear-gradient(to right, #dadada, #f9f9f9 72px); }
.panel h2 { font-size: 10px; font-weight: bold; color: #fff; padding: 2px 4px; line-height: 15px; background: linear-gradient(to right, #0f2c70, #336699 72px); }
.side .panel:first-child h2 { line-height: 20px; }
.results { flex: 1; }
.results h2 { line-height: 27px; }
.tree { list-style: none; padding: 4px 0 4px 15px; color: #3a62a0; }
.tree li { display: flex; align-items: center; gap: 8px; padding: 4px 0 5px; }
.tree li::before { content: "·"; flex: none; width: 9px; height: 9px; border: 1px solid #8ba0b5; background: linear-gradient(135deg, #fff, #c5d0dc); color: #000; font: bold 9px/6px "DejaVu Sans", sans-serif; text-align: center; }
.tree .open::before { content: "–"; }
.tree .sub { padding-left: 17px; }
.panel input[type=text] { width: 100%; height: 25px; border: 1px solid #767676; border-radius: 2px; background: #fff; padding: 1px 4px; }
.panel button { height: 25px; border: 1px solid #767676; border-radius: 3px; background: #efefef; font: 13px "Liberation Sans", Arial, sans-serif; color: #000; padding: 0 8px; }
.lookup { padding: 4px; display: grid; justify-items: center; }
.lookup label { justify-self: start; }
.lookup button { width: 100px; margin-top: 3px; }
.criteria { padding: 13px 6px 7px; }
fieldset { margin: 0 0 3px; padding: 0 11px 10px; border: 2px groove #c0c0c0; min-width: 0; }
fieldset.active { background: #f3d7d7; }
fieldset.active label { font-weight: bold; font-size: 10px; }
legend { height: 14px; margin-bottom: 9px; margin-left: -3px; padding: 0 5px; }
legend input { display: block; width: 13px; height: 13px; margin: 0; }
.row { display: grid; grid-template-columns: 84px 1fr; align-items: center; }
.three { grid-template-columns: 84px 1fr 139px 1fr 89px 1fr; margin-bottom: 7px; }
.city { padding-left: 29px; }
.brgy { padding-left: 22px; }
.panel .three input[type=text] { height: 23px; border-color: #b2b2b2; border-radius: 0; }
.actions { display: flex; gap: 5px; }
.credits { height: 53px; padding: 0 4px 0 3px; display: grid; grid-template-columns: 429px 849px 1fr 74px; align-items: center; background: #fff; color: #2f2f80; font: 10px "DejaVu Sans Condensed", sans-serif; }
.converge { width: 130px; height: 46px; font-family: Lato, sans-serif; }
.suntech { width: 74px; height: 40px; font-family: "Open Sans", sans-serif; }

/* Windows taskbar */
.taskbar { height: 40px; flex: none; display: flex; align-items: center; padding-left: 8px; background: linear-gradient(to right, rgba(8,12,18,.8), rgba(24,28,36,.2) 70%, rgba(4,6,10,.9)), linear-gradient(#7d8896 1px, #232b35 3px, #0b0f14 60%, #11151b); }
.taskbar button { border: 0; background: none; padding: 0; }
.orb svg { width: 38px; height: 38px; }
.apps { display: flex; gap: 4px; margin-left: 14px; }
.apps button { width: 58px; height: 38px; display: grid; place-items: center; border-radius: 3px; border: 1px solid transparent; }
.apps svg { width: 32px; height: 32px; }
.apps .run { border-color: #6f767e; background: linear-gradient(135deg, #7d838a, #3c4147 50%, #24282c); }
.apps .lit { background: linear-gradient(#c9cccf, #8e9295 60%, #b5b8ba); border-color: #d5d8da; }
.apps .violet { background: linear-gradient(135deg, #b4b6e6, #5457a0 60%, #8b8fd0); border-color: #b9bbe6; }
.apps .stack { border-right: 5px double #4d5358; }
.apps .c1 { color: #0067df; }
.apps .c2 { color: #0a489c; }
.tray { margin-left: auto; display: flex; align-items: center; gap: 8px; color: #fff; height: 40px; }
.tray .i8 { margin-right: 4px; }
.tray time { text-align: center; font: 11px/17px "Open Sans", sans-serif; margin-left: 10px; }
.tray .peek { width: 14px; height: 38px; border: 1px solid #555d66; background: linear-gradient(135deg, #555b62, #14181c); }

/* Session restore bubble, floats over the page */
.bubble { position: absolute; top: 67px; right: 1px; width: 544px; height: 172px; padding: 17px 16px; background: #fff; border-radius: 3px; box-shadow: 0 0 1px 1px rgba(0,0,0,.3), 0 3px 5px rgba(0,0,0,.4); color: #202124; display: flex; flex-direction: column; align-items: flex-start; }
.bubble h3 { font: 14px/22px "Open Sans", sans-serif; }
.bubble p { line-height: 16px; margin-top: 9px; }
.consent { display: flex; align-items: center; gap: 21px; margin-top: 20px; line-height: 16px; color: #5f6368; white-space: nowrap; }
.consent input { appearance: none; width: 12px; height: 12px; margin: 4px 0 0 2px; border: 2px solid #5f6368; border-radius: 1px; }
.consent a { color: #1a73e8; }
.bubble .restore { align-self: flex-end; margin-top: auto; width: 74px; height: 32px; border: 0; border-radius: 4px; background: #1a73e8; color: #fff; font-weight: 500; }
.bubble .shut { position: absolute; top: 8px; right: 9px; color: #5f6368; }

/* Internet Explorer frame */
.iebar { height: 54px; flex: none; position: relative; display: flex; align-items: flex-end; border-bottom: 1px solid #1a2c40; box-shadow: inset 0 -1px #6f8fae; background: linear-gradient(100deg, #45678a 0, #2b5478 60px, #1c4a70 180px, #174468 350px, #235279 480px, #0f3a5e 620px, #0e395d 1300px, #15436a 1420px, #0e3a5e 1500px, #0f3a5f 1750px, #2d5879); }
.glow { position: absolute; left: 673px; top: -4px; width: 576px; height: 29px; clip-path: polygon(0 0, 100% 0, 96% 100%, 5% 100%); background: linear-gradient(#7fb2e6 5px, #5d93d0 12px, #174a8b 20px, #1c4f86); filter: blur(1px); }
.ieback, .iefwd { border: 2px solid #1a4a70; border-radius: 50%; padding: 0; display: grid; place-items: center; color: #fff; position: relative; }
.ieback { width: 37px; height: 34px; margin-left: 1px; background: #0a84c8; }
.iefwd { width: 26px; height: 26px; margin: 0 4px 3px 5px; background: #45688a; border-color: #1c3f5e; color: #b4c3d2; transform: scaleX(-1); }
.address { position: relative; width: 543px; height: 23px; margin-bottom: 4px; border: 1px solid #123552; background: #aebdca; display: flex; align-items: center; gap: 4px; padding: 0 4px 0 2px; color: #4c545c; }
.ieurl { flex: 1; white-space: nowrap; font: 12px Lato, sans-serif; color: #6c7680; }
.ieurl b { font-weight: normal; color: #000; }
.ietab { width: 199px; height: 26px; margin-left: 4px; background: #fff; display: flex; align-items: center; justify-content: space-between; padding: 0 5px; font: 11px "Open Sans", sans-serif; color: #111; position: relative; }
.ietab .bare { color: #999; }
.ienew { width: 29px; height: 26px; border: 1px solid #4a6074; border-bottom: 0; background: #8293a2; padding: 0; position: relative; }
.ieright { margin-left: auto; height: 53px; display: flex; flex-direction: column; justify-content: space-between; align-items: flex-end; position: relative; }
.dark { border-color: #8fa5ba; box-shadow: none; margin-right: 3px; }
.dark button { background: #31587c; border-color: #8fa5ba; }
.dark .last { width: 46px; border: 0; }
.iecmds { display: flex; gap: 9px; padding: 0 8px 7px; color: #fff; }

/* Document header */
.dochead { height: 59px; flex: none; display: flex; background: #fff; color: #202124; padding-left: 21px; }
.logo { width: 24px; height: 32px; margin-top: 14px; }
.docinfo { margin-left: 20px; padding-top: 10px; }
.doctitle { display: flex; align-items: center; gap: 11px; color: #5f6368; }
.doctitle h1 { font-size: 16px; line-height: 22px; color: #202124; margin-right: 7px; }
.menus { display: flex; gap: 13px; font-size: 12px; line-height: 24px; white-space: nowrap; margin-top: 1px; }
.menus a { font-size: 13px; }
.menus .lastedit { font-size: 12px; color: #757575; text-decoration: underline; }
.docactions { margin: 14px 18px 0 auto; display: flex; align-items: center; height: 32px; color: #5f6368; }
.docactions .i20 { margin-right: 26px; }
.docactions .i20 + .i20 { margin-right: 18px; }
.share { width: 79px; height: 32px; border: 0; border-radius: 4px; background: #188038; color: #fff; font-size: 14px; font-weight: 500; display: flex; align-items: center; justify-content: center; gap: 6px; margin-right: 18px; padding: 0; }
.lower { flex: 1; min-height: 0; display: flex; }
.editor { flex: 1; min-width: 0; display: flex; flex-direction: column; }
.addons { width: 50px; border-left: 1px solid #dadce0; padding: 17px 0 20px; display: flex; flex-direction: column; align-items: center; gap: 32px; color: #5f6368; }
.bottom { margin-top: auto; }

/* Toolbar */
.tools { height: 36px; flex: none; border: solid #dadce0; border-width: 1px 0; display: flex; align-items: center; color: #5f6368; font-size: 12px; }
.tools svg { width: 18px; height: 18px; }
.tools .i8 { width: 8px; height: 8px; }
.tools .i12 { width: 12px; height: 12px; }
.grp, .pick { display: flex; align-items: center; height: 18px; border-right: 1px solid #dadce0; }
.grp button { width: 26px; height: 24px; border: 0; background: none; padding: 0; display: flex; align-items: center; justify-content: center; }
.lead { padding-left: 26px; }
.grp .num { width: 36px; justify-content: flex-start; font-size: 11px; padding-left: 1px; gap: 2px; }
.grp .drop { width: 35px; gap: 3px; }
.faint { color: #b9bbbe; }
.grp sub { font-size: 8px; margin-left: -5px; align-self: flex-end; }
.text { padding: 0 4px 0 3px; }
.text:nth-last-child(2) { border: 0; }
.grp b, .grp i, .grp s { font-size: 16px; font-weight: bold; }
.grp i { font-family: "Liberation Serif", serif; }
.inked { font-size: 16px; line-height: 19px; border-bottom: 4px solid #000; padding: 0 4px; }
.cells { padding: 0 4px; }
.pick { padding-right: 8px; }
.pick select { flex: 1; min-width: 0; appearance: none; border: 0; background: none; font: 10px Roboto, sans-serif; color: inherit; padding: 0; }
.zoom { width: 70px; padding-left: 15px; }
.font { width: 102px; padding-left: 14px; }
.size { width: 66px; padding-left: 13px; }
.pick.zoom select, .pick.size select { font-size: 12px; }
.collapse { margin: 0 11px 0 auto; }
.up { transform: rotate(-90deg); }
.down { transform: rotate(90deg); }
.left { transform: rotate(180deg); }
.formula { height: 21px; flex: none; border-bottom: 1px solid #c0c0c0; display: flex; align-items: center; }
.formula label { width: 41px; text-align: center; border-right: 1px solid #c8cbcf; font: italic 15px/15px "Liberation Serif", serif; color: #b0b3b6; }
.formula input { flex: 1; border: 0; padding: 0 9px; background: none; font: 12px "Liberation Sans", Arial, sans-serif; height: 18px; }

/* Grid */
.gridwrap { flex: 1; min-height: 0; display: flex; }
.sheet { flex: 1; min-width: 0; overflow: hidden; background: #fff; }
.sheet table { width: 100%; table-layout: fixed; border-collapse: separate; border-spacing: 0; font: 12px "Liberation Sans", Arial, sans-serif; color: #000; }
.rh { width: 41px; }
.ca { width: 207px; }
.cb { width: 122px; }
.cd { width: 115px; }
.ce { width: 199px; }
.cf { width: 130px; }
.cg { width: 91px; }
.sheet td, .sheet th { height: 19px; padding: 0 1px 0 2px; border: solid #e2e3e3; border-width: 0 1px 1px 0; line-height: 14px; white-space: nowrap; overflow: hidden; text-align: left; vertical-align: bottom; }
.sheet .right { text-align: right; }
.sheet thead th { height: 22px; background: #f8f9fa; border-color: #c0c0c0; text-align: center; vertical-align: middle; font: 10px Roboto, sans-serif; color: #5f6368; }
.sheet thead .chosen { background: #e8eaed; }
.sheet tbody th { background: #f8f9fa; border-color: #c0c0c0; text-align: center; vertical-align: middle; font: 9px Roboto, sans-serif; color: #5f6368; }
.sheet .frozen > * { height: 18px; border-bottom: 0; }
.sheet .rule td { height: 5px; background: #dadfe8; border: 0; }
.sheet .rule td:first-child { background: #bdbdbd; }
.vscroll { width: 16px; background: #f0f0f0; display: flex; flex-direction: column; align-items: center; color: #666; border: solid #dadce0; border-width: 0 1px 1px 0; padding-bottom: 14px; }
.cap { align-self: stretch; height: 44px; margin-bottom: 12px; background: #f8f8f8; border-bottom: 4px solid #dadfe8; }
.vthumb { width: 14px; height: 32px; margin-top: 63px; background: #ccc; }
.vscroll .down { margin-top: auto; }
.hscroll { height: 15px; flex: none; margin-left: 41px; margin-right: 16px; background: #efefef; display: flex; align-items: center; gap: 5px; padding: 0 13px; color: #666; }
.track { flex: 1; height: 14px; }
.hthumb { width: 62%; height: 14px; background: #ccc; }
.sheets { height: 36px; flex: none; background: #f1f3f4; border: solid #e0e2e5; border-width: 1px 0; display: flex; align-items: stretch; padding-left: 42px; color: #5f6368; }
.sheets .plus { width: 16px; font-size: 20px; margin-right: 14px; }
.sheettab { width: 87px; margin-left: 20px; border: solid #e3e5e8; border-width: 0 1px; background: #fff; color: #188038; font-weight: 500; font-size: 13px; display: flex; align-items: center; justify-content: center; gap: 8px; padding: 0; }
.explore { margin-left: auto; width: 95px; border: 0; border-left: 1px solid #bbb; background: #fbfcfc; color: #0f9d58; font-size: 11px; display: flex; align-items: center; gap: 12px; padding: 0 10px; }
```
FILE: sheet.js
```js
const records = [
  ["12:15:04", "4:50:06", "4:50:31"], ["12:12:40", "4:50:38", "4:51:02"],
  ["12:12:21", "4:51:09", "4:51:33"], ["12:17:17", "5:09:24", "5:09:49"],
  ["17:08:44", "5:09:56", "5:10:20"], ["12:17:28", "5:10:27", "5:11:19"],
  ["12:17:50", "5:30:25", "5:30:50"], ["12:18:58", "5:42:05", "5:42:41"],
  ["12:19:04", "5:50:37", "5:51:02"], ["12:19:08", "5:51:09", "5:51:33"],
  ["12:19:17", "5:51:39", "5:52:04"], ["12:19:30", "5:52:10", "5:52:36"]
];
const columns = 17;
const line = (n, cells, cls) => {
  let html = `<tr class="${cls || ""}"><th scope="row">${n}</th>`;
  for (let i = 0; i < columns; i++) {
    const right = cls !== "frozen" && (i === 2 || i === 5);
    html += `<td${right ? ' class="right"' : ""}>${cells[i] || ""}</td>`;
  }
  return html + "</tr>";
};
document.getElementById("letters").innerHTML = "<th></th>" +
  [..."ABCDEFGHIJKLMNOP"].map(c => `<th scope="col"${c === "E" ? ' class="chosen"' : ""}>${c}</th>`).join("") + "<th></th>";
let body = line(1, ["Process ID", "Process Type", "Time Start", "Status", "BOT Remarks", "Time End"], "frozen");
body += `<tr class="rule"><td></td><td colspan="${columns}"></td></tr>`;
for (let n = 80; n <= 122; n++) {
  const r = records[n - 80];
  body += line(n, r ? [`Inventory Return (20200713 ${r[0]})`, "ERP - RETURN", `07/13/2020 ${r[1]}`, "DONE", "SUCCESS", `07/13/2020 ${r[2]}`] : []);
}
document.getElementById("rows").innerHTML = body;
```
